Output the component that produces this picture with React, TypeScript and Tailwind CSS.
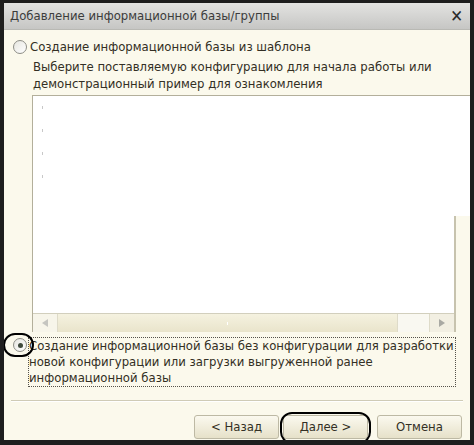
import React from "react";

const font = { fontFamily: '"DejaVu Sans Condensed", "Liberation Sans", Arial, sans-serif' };

function Radio({ checked }: { checked?: boolean }) {
  return (
    <div className="w-[14px] h-[14px] rounded-full border border-[#8d8d86] bg-gradient-to-br from-[#e6e6e0] to-white flex items-center justify-center shrink-0">
      {checked && <div className="w-[5px] h-[5px] rounded-full bg-[#3f4a3c]" />}
    </div>
  );
}

function Btn({ children, ring }: { children: React.ReactNode; ring?: boolean }) {
  return (
    <div className="relative">
      <div className="w-[85px] h-[24px] rounded-[3px] border border-[#bdb9a4] bg-gradient-to-b from-[#fbf9ef] to-[#e6e1c9] flex items-center justify-center text-[13px] text-[#332f24]">
        {children}
      </div>
      {ring && (
        <div className="absolute left-[-3px] top-[-3px] w-[91px] h-[32px] rounded-[12px] border-2 border-black" />
      )}
    </div>
  );
}

export default function App() {
  return (
    <div className="w-[474px] h-[445px] bg-[#1e1e1e] pt-[3px] pl-[4px] pr-[4px] pb-[5px]" style={font}>
      <div className="w-full h-full flex flex-col bg-[#fbf9ec] overflow-hidden">
        {/* Title bar */}
        <div className="h-[27px] shrink-0 flex items-center justify-between pl-[6px] pr-[7px] bg-gradient-to-b from-[#e3e3e1] to-[#c6c6c4] border-b border-[#b9b9b4]">
          <span className="text-[13px] text-[#3c3c3c]">Добавление информационной базы/группы</span>
          <span className="text-[17px] font-bold text-[#2a2a2a] leading-none">✕</span>
        </div>

        {/* Body */}
        <div className="flex-1 flex flex-col">
          <div className="flex items-center gap-[3px] pl-[9px] mt-[9px] h-[16px]">
            <Radio />
            <span className="text-[13px] text-[#332f24]">Создание информационной базы из шаблона</span>
          </div>
          <div className="pl-[29px] mt-[3px] text-[13px] leading-[17px] text-[#332f24]">
            <div>Выберите поставляемую конфигурацию для начала работы или</div>
            <div>демонстрационный пример для ознакомления</div>
          </div>

          {/* Listbox */}
          <div className="ml-[28px] mt-[3px] h-[237px] shrink-0 flex border-t border-l border-[#b3af9b] bg-white">
            <div className="flex-1 flex flex-col">
              <div className="flex-1 flex flex-col gap-[20px] pl-[9px] pt-[10px]">
                <div className="w-[1px] h-[3px] bg-[#c8c8c8]" />
                <div className="w-[1px] h-[3px] bg-[#c8c8c8]" />
                <div className="w-[1px] h-[3px] bg-[#c8c8c8]" />
                <div className="w-[1px] h-[3px] bg-[#c8c8c8]" />
              </div>
              <div className="h-[19px] flex border-t border-[#d2cfbd]">
                <div className="w-[25px] flex items-center justify-center bg-[#f7f5ea] border-r border-[#dedbc9]">
                  <div className="w-0 h-0 border-y-[4px] border-y-transparent border-r-[6px] border-r-[#c5c5c0]" />
                </div>
                <div className="flex-1 flex items-center justify-center bg-gradient-to-b from-[#f5f2e0] to-[#e9e4cb]">
                  <div className="w-[1px] h-[3px] bg-[#ffffff]" />
                </div>
                <div className="w-[32px] bg-[#f9f8f1] border-l border-[#dedbc9]" />
                <div className="w-[25px] flex items-center justify-center bg-[#f2efe2] border-l border-[#dedbc9]">
                  <div className="w-0 h-0 border-y-[4px] border-y-transparent border-l-[6px] border-l-[#a9a9a3]" />
                </div>
              </div>
            </div>
            <div className="w-[16px] flex flex-col">
              <div className="h-[120px] bg-white" />
              <div className="flex-1 bg-[#fbf9ec] border-l-2 border-[#c7c3ae]" />
            </div>
          </div>

          {/* Radio 2 */}
          <div className="relative flex items-start mt-[5px] pl-[9px]">
            <div className="mt-[1px]">
              <Radio checked />
            </div>
            <div className="ml-[1px] w-[428px] border border-dotted border-[#55524a] text-[13px] leading-[16px] text-[#332f24] whitespace-nowrap">
              <div>Создание информационной базы без конфигурации для разработки</div>
              <div>новой конфигурации или загрузки выгруженной ранее</div>
              <div>информационной базы</div>
            </div>
            <div className="absolute left-[-1px] top-[-4px] w-[31px] h-[24px] rounded-full border-2 border-black" />
          </div>

          {/* Separator */}
          <div className="mx-[7px] mt-[13px] h-[2px] shrink-0 border-t border-[#cfcbb6] border-b border-b-white" />

          {/* Buttons */}
          <div className="flex justify-end gap-[4px] pr-[8px] mt-[13px]">
            <Btn>&lt; Назад</Btn>
            <Btn ring>Далее &gt;</Btn>
            <div className="ml-[5px]">
              <Btn>Отмена</Btn>
            </div>
          </div>
        </div>
      </div>
    </div>
  );
}
